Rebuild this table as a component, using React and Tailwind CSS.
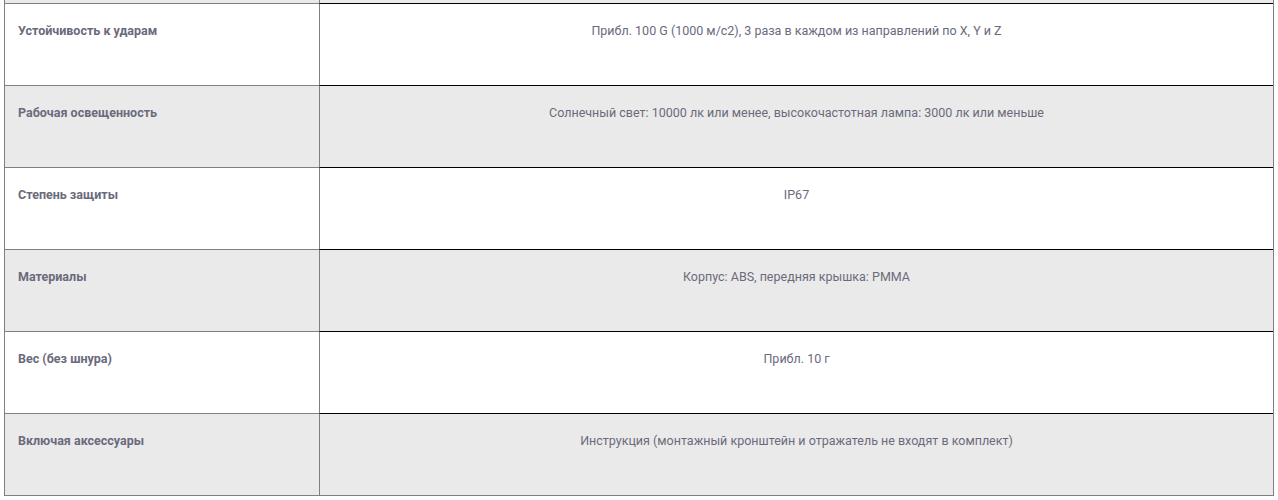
const rows = [
  { label: "", value: "" },
  {
    label: "Устойчивость к ударам",
    value: "Прибл. 100 G (1000 м/с2), 3 раза в каждом из направлений по X, Y и Z",
  },
  {
    label: "Рабочая освещенность",
    value:
      "Солнечный свет: 10000 лк или менее, высокочастотная лампа: 3000 лк или меньше",
  },
  { label: "Степень защиты", value: "IP67" },
  { label: "Материалы", value: "Корпус: ABS, передняя крышка: PMMA" },
  { label: "Вес (без шнура)", value: "Прибл. 10 г" },
  {
    label: "Включая аксессуары",
    value: "Инструкция (монтажный кронштейн и отражатель не входят в комплект)",
  },
];

export default function App() {
  return (
    <div className="h-[500px] overflow-hidden bg-white font-['Roboto',sans-serif] text-[12.5px] leading-5 text-[#6a6a7c]">
      <div className="-mt-[79px] ml-[4px] w-[1270px] border-x border-b border-[#808080]">
        {rows.map((row, i) => (
          <div
            key={i}
            className={`flex h-[82px] ${i % 2 === 0 ? "bg-[#eaeaea]" : "bg-white"}`}
          >
            <div className="w-[314px] shrink-0 border-t border-[#808080] pl-[13px] pt-[17px] font-bold">
              {row.label}
            </div>
            <div className="flex-1 border-l border-t border-l-[#808080] border-t-black pt-[17px] text-center">
              {row.value}
            </div>
          </div>
        ))}
      </div>
    </div>
  );
}
